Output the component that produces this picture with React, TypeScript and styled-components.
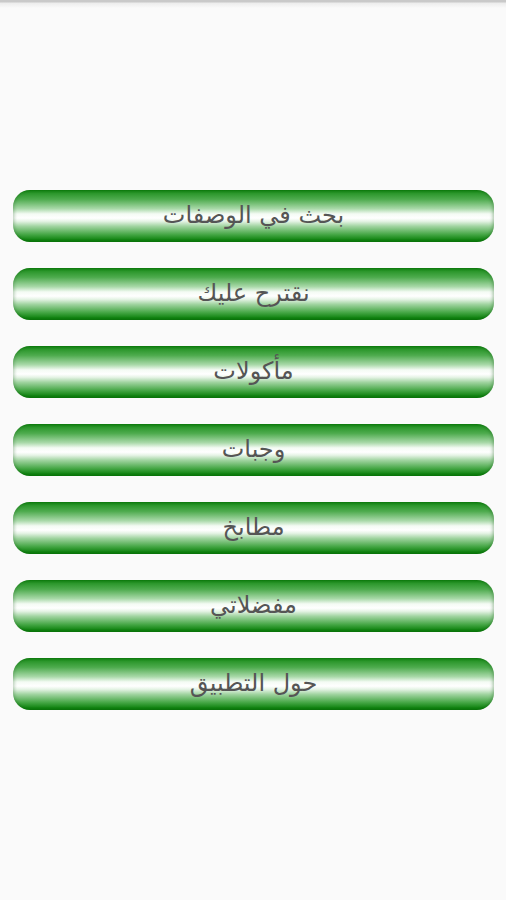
import React from "react";
import styled, { createGlobalStyle } from "styled-components";

const GlobalStyle = createGlobalStyle`
  html, body {
    margin: 0;
    padding: 0;
    background: #fafafa;
  }
  body {
    font-family: "DejaVu Sans", "Noto Sans", sans-serif;
  }
`;

const Screen = styled.div`
  width: 506px;
  height: 900px;
  background: #fafafa;
  display: flex;
  flex-direction: column;
  box-sizing: border-box;
`;

const TopEdge = styled.div`
  height: 8px;
  flex-shrink: 0;
  background: linear-gradient(#c9c9c9 0, #c9c9c9 2px, #ececec 3px, #fafafa 8px);
`;

const Menu = styled.nav`
  display: flex;
  flex-direction: column;
  gap: 26px;
  padding: 182px 12px 0 13px;
`;

const MenuButton = styled.button`
  height: 52px;
  width: 100%;
  border: none;
  border-radius: 17px;
  background: linear-gradient(
    to bottom,
    #0f820f 0%,
    #2a962a 6%,
    #4eab4e 18%,
    #a9d9a9 36%,
    #f4fbf4 46%,
    #ffffff 54%,
    #e6f4e6 60%,
    #9fd39f 70%,
    #43a543 86%,
    #118311 96%,
    #0a7a0a 100%
  );
  box-shadow: inset -2px 0 3px rgba(0, 80, 0, 0.25), inset 2px 0 3px rgba(0, 80, 0, 0.2);
  color: #555555;
  font-family: "DejaVu Sans", sans-serif;
  font-size: 24px;
  direction: rtl;
  cursor: pointer;
  display: flex;
  align-items: center;
  justify-content: center;
  padding: 0 0 3px;
`;

const items = [
  "بحث في الوصفات",
  "نقترح عليك",
  "مأكولات",
  "وجبات",
  "مطابخ",
  "مفضلاتي",
  "حول التطبيق",
];

export default function App() {
  return (
    <Screen>
      <GlobalStyle />
      <TopEdge />
      <Menu>
        {items.map(function (label: string) {
          return (
            <MenuButton type="button" key={label}>
              {label}
            </MenuButton>
          );
        })}
      </Menu>
    </Screen>
  );
}
